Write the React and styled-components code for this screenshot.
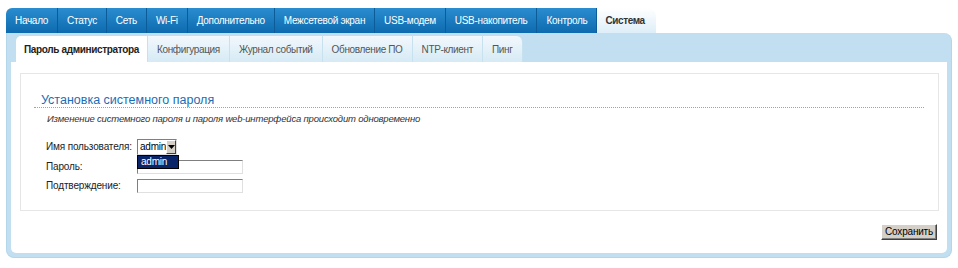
import React from "react";
import styled, { createGlobalStyle, css } from "styled-components";

const GlobalStyle = createGlobalStyle`
    body {
        margin: 0;
        background: #ffffff;
        font-family: "Liberation Sans", Arial, sans-serif;
    }
`;

const mainTabs = [
    "Начало",
    "Статус",
    "Сеть",
    "Wi-Fi",
    "Дополнительно",
    "Межсетевой экран",
    "USB-модем",
    "USB-накопитель",
    "Контроль",
    "Система",
];

const subTabs = [
    "Пароль администратора",
    "Конфигурация",
    "Журнал событий",
    "Обновление ПО",
    "NTP-клиент",
    "Пинг",
];

const App = () => {
    return (
        <React.Fragment>
            <GlobalStyle />
            <Page>
                <MainNav>
                    {mainTabs.map((name, i) => (
                        <MainTab key={name} $active={i === mainTabs.length - 1} $first={i === 0}>
                            {name}
                        </MainTab>
                    ))}
                </MainNav>

                <Panel>
                    <SubNav>
                        {subTabs.map((name, i) => (
                            <SubTab key={name} $active={i === 0} $last={i === subTabs.length - 1}>
                                {name}
                            </SubTab>
                        ))}
                    </SubNav>

                    <Content>
                        <FieldBox>
                            <Legend>Установка системного пароля</Legend>
                            <Hint>Изменение системного пароля и пароля web-интерфейса происходит одновременно</Hint>

                            <Form>
                                <Row>
                                    <Label>Имя пользователя:</Label>
                                    <SelectWrap>
                                        <Select>
                                            <SelectValue>admin</SelectValue>
                                            <SelectArrow>
                                                <svg width="7" height="4" viewBox="0 0 7 4">
                                                    <path d="M0 0H7L3.5 4Z" fill="#000" />
                                                </svg>
                                            </SelectArrow>
                                        </Select>
                                        <DropList>
                                            <DropOption>admin</DropOption>
                                        </DropList>
                                    </SelectWrap>
                                </Row>
                                <Row $tall>
                                    <Label>Пароль:</Label>
                                    <Input />
                                </Row>
                                <Row $tall>
                                    <Label>Подтверждение:</Label>
                                    <Input />
                                </Row>
                            </Form>
                        </FieldBox>

                        <Actions>
                            <SaveBtn>Сохранить</SaveBtn>
                        </Actions>
                    </Content>
                </Panel>
            </Page>
        </React.Fragment>
    );
};

const Page = styled.div`
    padding: 8px 6px 0 6px;
    width: 946px;
`;

const MainNav = styled.div`
    display: flex;
    height: 25px;
`;

const MainTab = styled.div`
    display: flex;
    align-items: center;
    padding: 0 9px;
    font-size: 10px;
    letter-spacing: -0.3px;
    color: #ffffff;
    background: linear-gradient(#2a8dcf, #0d6aae);
    border-right: 1px solid #0b5c99;
    white-space: nowrap;

    ${({ $first }) => $first && css`
        border-top-left-radius: 6px;
    `}

    ${({ $active }) => $active && css`
        color: #333333;
        font-weight: bold;
        letter-spacing: -0.4px;
        padding: 0 11px 0 8px;
        background: linear-gradient(#ffffff, #ddeef8);
        border-right: none;
        border-top-right-radius: 8px;
    `}
`;

const Panel = styled.div`
    background: #c1dff0;
    border: 1px solid #b3d6eb;
    border-top: none;
    border-radius: 0 8px 8px 8px;
    padding: 0 4px 4px 4px;
`;

const SubNav = styled.div`
    display: flex;
    height: 26px;
    padding: 3px 0 0 5px;
`;

const SubTab = styled.div`
    display: flex;
    align-items: center;
    padding: 0 9px;
    font-size: 10px;
    letter-spacing: -0.35px;
    color: #555555;
    background: linear-gradient(#f2f8fc, #d6eaf5);
    border-right: 1px solid #c7e1ef;
    white-space: nowrap;

    ${({ $active }) => $active && css`
        color: #222222;
        font-weight: bold;
        letter-spacing: -0.35px;
        padding: 0 8px;
        background: #ffffff;
        border-top-left-radius: 5px;
    `}

    ${({ $last }) => $last && css`
        border-top-right-radius: 6px;
    `}
`;

const Content = styled.div`
    background: #ffffff;
    border-radius: 0 0 5px 5px;
    padding: 11px 8px 13px 9px;
`;

const FieldBox = styled.div`
    border: 1px solid #e6e6e6;
    padding: 19px 14px 17px 13px;
`;

const Legend = styled.div`
    height: 14px;
    line-height: 14px;
    padding-left: 7px;
    font-size: 12.5px;
    color: #1a6db4;
    border-bottom: 1px dotted #6fb0dc;
`;

const Hint = styled.div`
    margin-top: 4px;
    padding-left: 13px;
    line-height: 14px;
    font-size: 9.5px;
    letter-spacing: -0.18px;
    font-style: italic;
    color: #333333;
    white-space: nowrap;
`;

const Form = styled.div`
    display: flex;
    flex-direction: column;
    gap: 4px;
    margin-top: 12px;
    padding-left: 12px;
`;

const Row = styled.div`
    display: flex;
    align-items: center;
    height: ${({ $tall }) => ($tall ? "15px" : "17px")};
`;

const Label = styled.div`
    width: 91px;
    font-size: 10px;
    letter-spacing: -0.15px;
    color: #222222;
    white-space: nowrap;
`;

const SelectWrap = styled.div`
    position: relative;
`;

const Select = styled.div`
    display: flex;
    align-items: center;
    width: 38px;
    height: 14px;
    border: 1px solid;
    border-color: #7f7f7f #e0e0e0 #e0e0e0 #7f7f7f;
    background: #ffffff;
`;

const SelectValue = styled.span`
    flex: 1;
    padding-left: 2px;
    font-size: 10px;
    letter-spacing: -0.2px;
    color: #000000;
`;

const SelectArrow = styled.span`
    display: flex;
    align-items: center;
    justify-content: center;
    width: 11px;
    height: 12px;
    background: #d4d0c8;
    border: 1px solid;
    border-color: #ffffff #404040 #404040 #ffffff;
`;

const DropList = styled.div`
    position: absolute;
    top: 16px;
    left: 0;
    width: 40px;
    border: 1px solid #000000;
    background: #0a246a;
`;

const DropOption = styled.div`
    height: 12px;
    line-height: 12px;
    padding-left: 3px;
    font-size: 10px;
    letter-spacing: -0.2px;
    color: #ffffff;
`;

const Input = styled.div`
    width: 104px;
    height: 12px;
    border: 1px solid;
    border-color: #7f7f7f #e0e0e0 #e0e0e0 #7f7f7f;
    background: #ffffff;
`;

const Actions = styled.div`
    display: flex;
    justify-content: flex-end;
    margin-top: 13px;
    padding-right: 2px;
`;

const SaveBtn = styled.button`
    height: 16px;
    padding: 0 3px;
    font-family: "Liberation Sans", Arial, sans-serif;
    font-size: 10px;
    letter-spacing: -0.2px;
    line-height: 12px;
    color: #000000;
    background: #d4d0c8;
    border: 1px solid;
    border-color: #ffffff #404040 #404040 #ffffff;
    box-shadow: inset -1px -1px 0 #808080;
`;

export default App;
